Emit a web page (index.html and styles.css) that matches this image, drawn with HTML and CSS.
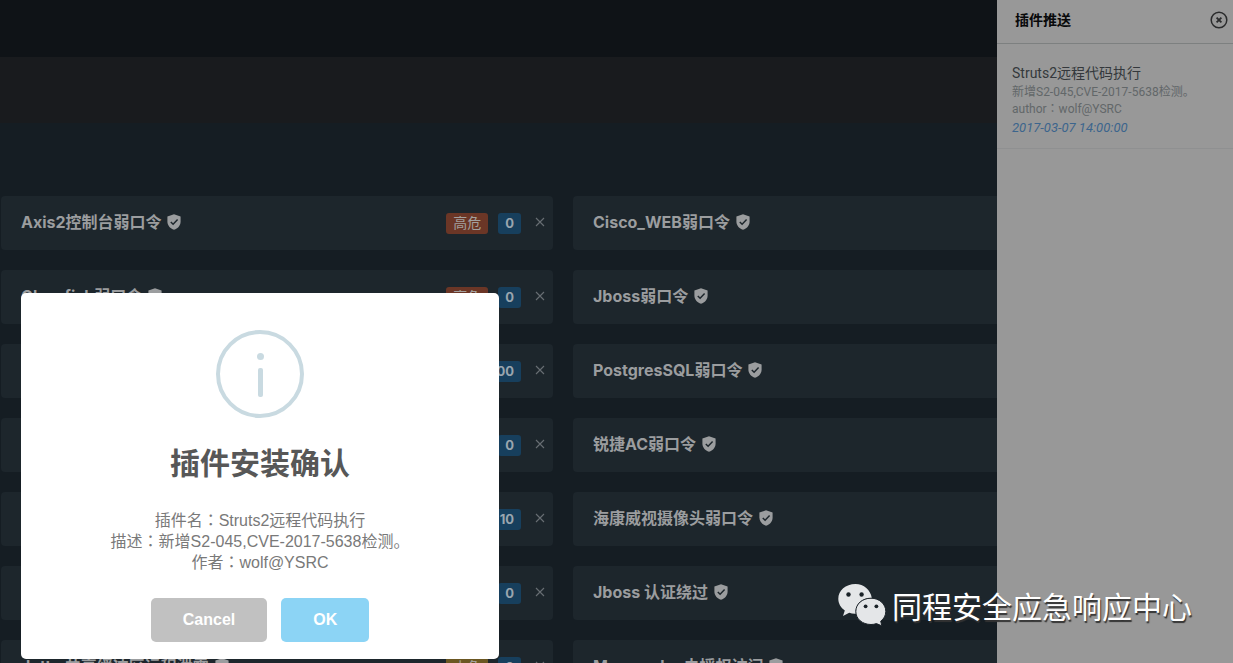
FILE: index.html
```
<!DOCTYPE html>
<html lang="zh-CN">
<head>
<meta charset="utf-8">
<title>插件推送</title>
<link rel="stylesheet" href="styles.css">
</head>
<body>
<svg class="sprite" aria-hidden="true">
  <symbol id="shield" viewBox="0 0 14 16">
    <path fill="currentColor" d="M7 0.3 L13.6 2.6 V7.5 C13.6 11.5 10.8 14.6 7 15.8 C3.2 14.6 0.4 11.5 0.4 7.5 V2.6 Z"/>
    <path class="tick" d="M3.8 8 L6.1 10.2 L10.6 5.6"/>
  </symbol>
  <symbol id="cross" viewBox="0 0 10 10">
    <path d="M1 1 L9 9 M9 1 L1 9" fill="none" stroke="currentColor" stroke-width="1.1"/>
  </symbol>
</svg>
<div class="topbar"></div>
<div class="subbar"></div>
<main class="plugins">
  <article class="card"><h2 class="name">Axis2控制台弱口令 <svg class="shield"><use href="#shield"/></svg></h2><span class="tag high">高危</span><span class="tag count">0</span><button class="remove" aria-label="删除"><svg><use href="#cross"/></svg></button></article>
  <article class="card"><h2 class="name">Cisco_WEB弱口令 <svg class="shield"><use href="#shield"/></svg></h2></article>
  <article class="card"><h2 class="name">Glassfish弱口令 <svg class="shield"><use href="#shield"/></svg></h2><span class="tag high">高危</span><span class="tag count">0</span><button class="remove" aria-label="删除"><svg><use href="#cross"/></svg></button></article>
  <article class="card"><h2 class="name">Jboss弱口令 <svg class="shield"><use href="#shield"/></svg></h2></article>
  <article class="card"><span class="tag count">00</span><button class="remove" aria-label="删除"><svg><use href="#cross"/></svg></button></article>
  <article class="card"><h2 class="name">PostgresSQL弱口令 <svg class="shield"><use href="#shield"/></svg></h2></article>
  <article class="card"><span class="tag count">0</span><button class="remove" aria-label="删除"><svg><use href="#cross"/></svg></button></article>
  <article class="card"><h2 class="name">锐捷AC弱口令 <svg class="shield"><use href="#shield"/></svg></h2></article>
  <article class="card"><span class="tag count">10</span><button class="remove" aria-label="删除"><svg><use href="#cross"/></svg></button></article>
  <article class="card"><h2 class="name">海康威视摄像头弱口令 <svg class="shield"><use href="#shield"/></svg></h2></article>
  <article class="card"><span class="tag count">0</span><button class="remove" aria-label="删除"><svg><use href="#cross"/></svg></button></article>
  <article class="card"><h2 class="name">Jboss 认证绕过 <svg class="shield"><use href="#shield"/></svg></h2></article>
  <article class="card"><h2 class="name">Jetty 共享缓冲区远程泄露 <svg class="shield"><use href="#shield"/></svg></h2><span class="tag medium">中危</span><span class="tag count">0</span><button class="remove" aria-label="删除"><svg><use href="#cross"/></svg></button></article>
  <article class="card"><h2 class="name">Memcache 未授权访问 <svg class="shield"><use href="#shield"/></svg></h2></article>
</main>

<aside class="panel">
  <header class="panel-head">
    <h2 class="panel-title">插件推送</h2>
    <button class="panel-close" aria-label="关闭">
      <svg viewBox="0 0 18 18" fill="none" stroke="currentColor"><circle cx="9" cy="9" r="7.8" stroke-width="1.5"/><path d="M6.6 6.6 L11.4 11.4 M11.4 6.6 L6.6 11.4" stroke-width="1.8"/></svg>
    </button>
  </header>
  <div class="push">
    <h3 class="push-name">Struts2远程代码执行</h3>
    <p class="push-text">新增S2-045,CVE-2017-5638检测。</p>
    <p class="push-text">author<span class="colon" lang="zh-TW">：</span>wolf@YSRC</p>
    <time class="push-time">2017-03-07 14:00:00</time>
  </div>
</aside>

<section class="modal" role="dialog" aria-labelledby="modal-title">
  <svg class="info" viewBox="0 0 88 88"><circle cx="44" cy="44" r="42" fill="none" stroke="#c9dae1" stroke-width="4"/><circle cx="44.5" cy="26.5" r="3.5" fill="#c9dae1"/><rect x="42" y="38" width="5" height="29" rx="2" fill="#c9dae1"/></svg>
  <h1 class="modal-title" id="modal-title">插件安装确认</h1>
  <p class="modal-text">插件名<span class="colon" lang="zh-TW">：</span>Struts2远程代码执行<br>描述<span class="colon" lang="zh-TW">：</span>新增S2-045,CVE-2017-5638检测。<br>作者<span class="colon" lang="zh-TW">：</span>wolf@YSRC</p>
  <div class="actions">
    <button class="btn cancel">Cancel</button>
    <button class="btn ok">OK</button>
  </div>
</section>

<div class="watermark">
  <svg class="wechat" viewBox="0 0 48 42">
    <path fill="#e4e6e8" d="M17.5 0 C7.6 0 0.3 6.6 0.3 14.8 C0.3 19.6 2.8 23.8 6.8 26.5 L5 32 L11.2 28.8 C13.5 29.6 15.6 30 18 29.8 C16.2 21.5 23.5 13.6 33.8 14 C32.6 6 25.8 0 17.5 0 Z"/>
    <path fill="#e4e6e8" stroke="#1a2228" stroke-width="1" d="M33 14.2 C24.3 14.2 17.8 20 17.8 27.4 C17.8 34.8 24.3 40.5 33 40.5 C35 40.5 36.8 40.2 38.4 39.6 L43.8 41.8 L42.7 37.2 C46 34.8 47.8 31.4 47.8 27.4 C47.8 20 41.3 14.2 33 14.2 Z"/>
    <g fill="#1a2228"><circle cx="10.5" cy="10.5" r="2.2"/><circle cx="23.6" cy="10.5" r="2.2"/><circle cx="27.6" cy="22.3" r="1.9"/><circle cx="38.4" cy="22.3" r="1.9"/></g>
  </svg>
  <span>同程安全应急响应中心</span>
</div>
</body>
</html>
```
FILE: styles.css
```
* { box-sizing: border-box; }
body {
  margin: 0;
  height: 100vh;
  overflow: hidden;
  position: relative;
  background: #151d23;
  font-family: Roboto, "Noto Sans CJK SC", sans-serif;
}
h1, h2, h3, p { margin: 0; }
button { border: 0; padding: 0; background: none; font-family: inherit; cursor: pointer; }
.sprite { position: absolute; width: 0; height: 0; }
.colon { font-family: "Noto Sans CJK TC", sans-serif; line-height: 1; }
.topbar { height: 57px; background: #0f1317; }
.subbar { height: 66px; background: #191b1e; }

.plugins {
  display: grid;
  grid-template-columns: 1fr 1fr;
  gap: 20px;
  padding: 73px 108px 0 1px;
}
.card {
  display: flex;
  align-items: center;
  justify-content: flex-end;
  height: 54px;
  padding: 0 4px 0 20px;
  border-radius: 4px;
  background: #1d262c;
}
.name {
  display: flex;
  align-items: center;
  gap: 2px;
  margin-right: auto;
  padding-bottom: 2px;
  color: #9b9d9f;
  font: bold 16px/24px Inter, "Noto Sans CJK SC", sans-serif;
  white-space: pre;
}
.shield { width: 14px; height: 16px; color: #9b9d9f; }
.tick { fill: none; stroke: #1d262c; stroke-width: 1.5; }
.tag {
  margin-right: 10px;
  padding: 0 7px;
  border-radius: 3px;
  color: #a3a09e;
  font-size: 14px;
  line-height: 21px;
}
.high { background: #6b3626; }
.medium { background: #6b5722; }
.count {
  background: #173f5d;
  color: #9aa5ae;
  font: bold 13px/21px Inter, sans-serif;
}
.remove { display: flex; padding: 4px 4px 6px; color: #686e73; }
.remove svg { width: 10px; height: 10px; }

.panel {
  position: absolute;
  top: 0;
  right: 0;
  bottom: 0;
  width: 236px;
  background: #989898;
}
.panel-head {
  display: flex;
  align-items: center;
  justify-content: space-between;
  height: 44px;
  padding: 0 5px 3px 18px;
  border-bottom: 1px solid #7d8080;
}
.panel-title { color: #08090a; font-size: 14px; line-height: 20px; }
.panel-close { display: flex; color: #2a2b2c; }
.panel-close svg { width: 18px; height: 18px; }
.push { padding: 19px 15px 10px; border-bottom: 1px solid #8f9091; }
.push-name { margin-bottom: 1px; color: #34383c; font-size: 14px; font-weight: normal; line-height: 20px; }
.push-text { color: #626769; font-size: 12px; line-height: 17px; white-space: nowrap; }
.push-time { display: block; color: #3c658d; font-size: 13px; font-style: italic; line-height: 20px; }

.modal {
  position: absolute;
  left: 21px;
  top: 293px;
  width: 478px;
  display: flex;
  flex-direction: column;
  align-items: center;
  padding: 37px 17px 17px;
  border-radius: 5px;
  background: #fff;
  font-family: "Liberation Sans", "Noto Sans CJK SC", sans-serif;
}
.info { width: 88px; height: 88px; }
.modal-title { margin-top: 26px; color: #575757; font-size: 30px; line-height: 40px; }
.modal-text { margin-top: 26px; color: #797979; font-size: 16px; line-height: 21px; text-align: center; }
.actions { display: flex; gap: 14px; margin-top: 25px; }
.btn { padding: 0 32px; border-radius: 5px; color: #fff; font-size: 16px; font-weight: bold; line-height: 44px; }
.cancel { background: #c1c1c1; }
.ok { background: #8cd4f5; }

.watermark {
  position: absolute;
  right: 41px;
  bottom: 35px;
  display: flex;
  align-items: center;
  gap: 6px;
  color: #fff;
  font: 30px/46px "Noto Sans CJK SC", sans-serif;
  text-shadow: 1px 2px 1px #333;
  white-space: nowrap;
}
.wechat { width: 48px; height: 42px; }
```
